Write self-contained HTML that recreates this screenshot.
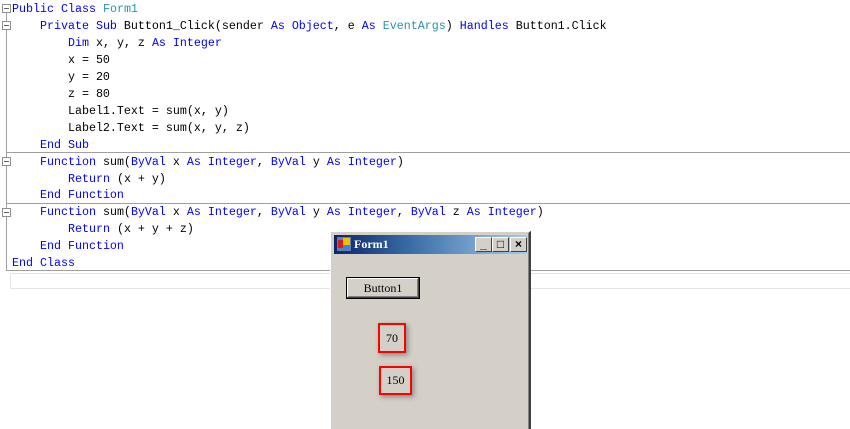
<!DOCTYPE html>
<html><head><style>
body{margin:0;width:850px;height:428px;background:#fff;position:relative;overflow:hidden;font-family:"Liberation Mono",monospace;}
.code{position:absolute;left:12px;top:1px;font-size:11.67px;line-height:16.95px;white-space:pre;color:#000;}
.k{color:#0000ff}.t{color:#2b91af}
.hl{position:absolute;height:1px;background:#a0a0a0}
.box{position:absolute;left:2px;width:7px;height:7px;border:1px solid #909090;background:#fff}
.box:after{content:"";position:absolute;left:1px;top:3px;width:5px;height:1px;background:#606060}
.vl{position:absolute;left:6px;width:1px;background:#a0a0a0}
.win{position:absolute;left:330px;top:231px;width:198px;height:197px;background:#d4d0c8;border-left:1px solid #fff;border-top:1px solid #fff;border-right:2px solid #404040;box-shadow:inset 1px 1px 0 #d4d0c8,inset -1px 0 0 #808080;}
.title{position:absolute;left:3px;top:3px;width:193px;height:19px;background:linear-gradient(to right,#0a246a,#3a6ea5 40%,#a6caf0);}
.title span{position:absolute;left:20px;top:2px;color:#fff;font:bold 12px "Liberation Serif",serif;}
.tb{position:absolute;top:2px;width:15px;height:13px;background:#d4d0c8;border:1px solid;border-color:#fff #404040 #404040 #fff;font:bold 12px "Liberation Sans",sans-serif;text-align:center;line-height:13px;}
.btn{position:absolute;left:15px;top:45px;width:72px;height:20px;border:1px solid #000;box-shadow:inset -1px -1px 0 #404040,inset 1px 1px 0 #fff,inset -2px -2px 0 #808080;font:12px "Liberation Serif",serif;text-align:center;line-height:20px;}
.lab{position:absolute;border:2px solid #f00;font:12px "Liberation Serif",serif;text-align:center;box-shadow:2px 2px 5px rgba(0,0,0,.35);}
</style></head><body>
<div class="hl" style="left:7px;top:152px;width:843px"></div>
<div class="hl" style="left:7px;top:203px;width:843px"></div>
<div class="hl" style="left:7px;top:270px;width:843px"></div>
<div style="position:absolute;left:10px;top:273px;width:840px;height:14px;border:1px solid #e6e6e6;border-right:none"></div>
<div class="vl" style="top:13px;height:258px"></div>
<div class="box" style="top:4px"></div>
<div class="box" style="top:21px"></div>
<div class="box" style="top:157px"></div>
<div class="box" style="top:208px"></div>
<div class="code"><span class="k">Public Class</span> <span class="t">Form1</span>
    <span class="k">Private Sub</span> Button1_Click(sender <span class="k">As Object</span>, e <span class="k">As</span> <span class="t">EventArgs</span>) <span class="k">Handles</span> Button1.Click
        <span class="k">Dim</span> x, y, z <span class="k">As Integer</span>
        x = 50
        y = 20
        z = 80
        Label1.Text = sum(x, y)
        Label2.Text = sum(x, y, z)
    <span class="k">End Sub</span>
    <span class="k">Function</span> sum(<span class="k">ByVal</span> x <span class="k">As Integer</span>, <span class="k">ByVal</span> y <span class="k">As Integer</span>)
        <span class="k">Return</span> (x + y)
    <span class="k">End Function</span>
    <span class="k">Function</span> sum(<span class="k">ByVal</span> x <span class="k">As Integer</span>, <span class="k">ByVal</span> y <span class="k">As Integer</span>, <span class="k">ByVal</span> z <span class="k">As Integer</span>)
        <span class="k">Return</span> (x + y + z)
    <span class="k">End Function</span>
<span class="k">End Class</span></div>
<div class="win">
 <div class="title">
  <svg style="position:absolute;left:2px;top:1px" width="16" height="16"><rect x="1" y="1" width="14" height="14" fill="#6080b0"/><rect x="2" y="4" width="5" height="8" fill="#d02020"/><rect x="7" y="2" width="7" height="7" fill="#f0c000"/><rect x="8" y="10" width="5" height="4" fill="#4080e0"/></svg>
  <span>Form1</span>
  <div class="tb" style="left:141px">_</div>
  <div class="tb" style="left:158px">□</div>
  <div class="tb" style="left:176px">×</div>
 </div>
 <div class="btn">Button1</div>
 <div class="lab" style="left:47px;top:91px;width:24px;height:26px;line-height:26px">70</div>
 <div class="lab" style="left:48px;top:134px;width:29px;height:25px;line-height:25px">150</div>
</div>
</body></html>
